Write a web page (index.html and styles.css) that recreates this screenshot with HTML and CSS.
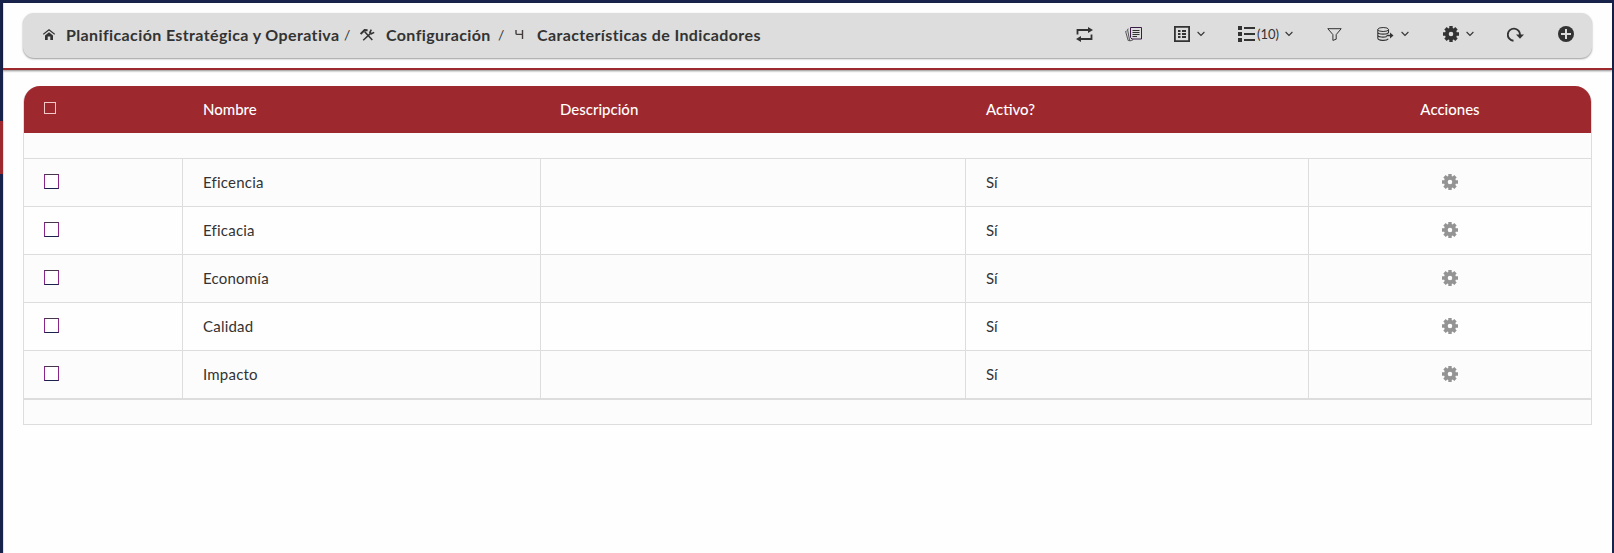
FILE: index.html
```html
<!DOCTYPE html>
<html lang="es">
<head>
<meta charset="utf-8">
<title>Características de Indicadores</title>
<link rel="stylesheet" href="styles.css">
</head>
<body>
<svg class="defs" width="0" height="0">
  <symbol id="gear" viewBox="0 0 16 16">
    <path fill-rule="evenodd" d="M6.300 0h3.400v2l1 .4 1.600-1.300 2.400 2.400-1.400 1.600.5 1.200H16v3.400h-2.200l-.5 1.200 1.400 1.600-2.400 2.400-1.600-1.400-1 .5V16H6.300v-2l-1-.5-1.600 1.400-2.400-2.400 1.400-1.600-.5-1.200H0V6.300h2.200l.5-1.200-1.400-1.600 2.400-2.400 1.600 1.300 1-.4zM8 5.700a2.300 2.300 0 1 0 0 4.600 2.300 2.300 0 1 0 0-4.600z"/>
  </symbol>
  <symbol id="chev" viewBox="0 0 8 6"><path d="M.6 1l3.4 3.4L7.4 1" fill="none" stroke="#333" stroke-width="1.1"/></symbol>
</svg>
<div class="page">
  <div class="tab"></div>
  <header class="top">
    <div class="bar">
      <nav class="crumbs">
        <svg class="home" width="12" height="11" viewBox="0 0 12 11"><path d="M.3 5.400L6 .8l5.700 4.600" fill="none" stroke="#333" stroke-width="1.200"/><path d="M2 6.500L6 3.200l4 3.300V11H7.300V7.600H4.700V11H2z" fill="#333"/></svg>
        <b class="c1">Planificación Estratégica y Operativa</b>
        <i class="s1">/</i>
        <svg class="tools" width="15" height="12" viewBox="0 0 15 12"><path d="M.6 5L4.600 1.100l3 .1" fill="none" stroke="#333" stroke-width="2"/><path d="M4.500 2.500l7.800 8.600" stroke="#333" stroke-width="1.500"/><path d="M3.200 11.300L10.600 4.400" stroke="#333" stroke-width="1.500"/><path d="M11.300.7L9.900 3.300l1.500 1.500 2.800-1.400" fill="none" stroke="#333" stroke-width="1.600"/></svg>
        <b class="c2">Configuración</b>
        <i class="s2">/</i>
        <svg class="four" width="9" height="11" viewBox="0 0 9 11"><path d="M1 1v3.200q0 1.200 1.200 1.200H7.500M7.500 1v9" fill="none" stroke="#443c3c" stroke-width="1.400"/></svg>
        <b class="c3">Características de Indicadores</b>
      </nav>
      <div class="actions">
        <svg class="i1" width="17" height="15" viewBox="0 0 17 15"><path d="M1.500 7.500V3h11M15.500 7.500V12H4.500" fill="none" stroke="#333" stroke-width="1.800"/><path d="M12 0l5 3-5 3zM5 9L0 12l5 3z" fill="#333"/></svg>
        <svg class="i2" width="17" height="15" viewBox="0 0 17 15"><path d="M3.600 2L2.500 2.300 4.700 14l3.500-1.300M1.700 4L.6 4.400l2.600 9.200 1.600-.2" fill="none" stroke="#555" stroke-width="1"/><path d="M5.500.5h11v11.500H7L5.500 10.500z" fill="#ddd" stroke="#3b1c46" stroke-width="1"/><path d="M7.500 3.500h7M7.500 5.500h7M7.500 7.500h7M7.500 9.500h4.500" stroke="#333" stroke-width="1"/></svg>
        <svg class="i3" width="16" height="16" viewBox="0 0 16 16"><path d="M.9.9h14.200v14.200H.9z" fill="none" stroke="#333" stroke-width="1.800"/><path d="M4 5h2.500M8 5h4M4 8h2.500M8 8h4M4 11h2.500M8 11h4" stroke="#333" stroke-width="1.800"/></svg>
        <svg class="v1" width="8" height="6"><use href="#chev"/></svg>
        <svg class="i4" width="17" height="16" viewBox="0 0 17 16"><path d="M0 0h4v4H0zM0 6h4v4H0zM0 12h4v4H0zM6 1h11v2H6zM6 7h11v2H6zM6 13h11v2H6z" fill="#333"/></svg>
        <span class="count">(10)</span>
        <svg class="v2" width="8" height="6"><use href="#chev"/></svg>
        <svg class="i5" width="15" height="13" viewBox="0 0 15 13"><path d="M.8.7h13.400L9.200 6.600v4.600L5.900 12.400V6.600z" fill="none" stroke="#333" stroke-width="1"/></svg>
        <svg class="i6" width="17" height="14" viewBox="0 0 17 14"><path d="M11.500 6V2.500M.8 2.500v8.500c0 3 9 3 10.500.7M.8 5.300c0 2.400 10.700 2.400 10.700 0M.8 8.200c0 2 6 2.400 9 1.300" fill="none" stroke="#333" stroke-width="1.100"/><ellipse cx="6.150" cy="2.500" rx="5.350" ry="2" fill="none" stroke="#333"/><path d="M9.500 8.500H14" stroke="#333" stroke-width="1.500"/><path d="M13 5.500l3.500 3-3.500 3z" fill="#333"/></svg>
        <svg class="v3" width="8" height="6"><use href="#chev"/></svg>
        <svg class="i7" width="16" height="16" fill="#333"><use href="#gear"/></svg>
        <svg class="v4" width="8" height="6"><use href="#chev"/></svg>
        <svg class="i8" width="17" height="15" viewBox="0 0 17 15"><path d="M6.500 13.800A6.100 6.100 0 1 1 13 8" fill="none" stroke="#333" stroke-width="1.900"/><path d="M9 7.500h8l-4 4.200z" fill="#333"/></svg>
        <svg class="i9" width="16" height="16" viewBox="0 0 16 16"><circle cx="8" cy="8" r="8" fill="#333"/><path d="M8 3v10M3 8h10" stroke="#ddd" stroke-width="2"/></svg>
      </div>
    </div>
  </header>
  <main class="grid">
    <div class="row head">
      <div><span class="box small"></span></div><div><span>Nombre</span></div><div class="desc"><span>Descripción</span></div><div><span>Activo?</span></div><div class="act"><span>Acciones</span></div>
    </div>
    <div class="spacer"></div>
    <div class="row alt"><div><span class="box"></span></div><div><span class="name">Eficencia</span></div><div></div><div>Sí</div><div class="act"><svg width="16" height="16" fill="#949494"><use href="#gear"/></svg></div></div>
    <div class="row"><div><span class="box"></span></div><div><span class="name">Eficacia</span></div><div></div><div>Sí</div><div class="act"><svg width="16" height="16" fill="#949494"><use href="#gear"/></svg></div></div>
    <div class="row alt"><div><span class="box"></span></div><div><span class="name">Economía</span></div><div></div><div>Sí</div><div class="act"><svg width="16" height="16" fill="#949494"><use href="#gear"/></svg></div></div>
    <div class="row"><div><span class="box"></span></div><div><span class="name">Calidad</span></div><div></div><div>Sí</div><div class="act"><svg width="16" height="16" fill="#949494"><use href="#gear"/></svg></div></div>
    <div class="row alt"><div><span class="box"></span></div><div><span class="name">Impacto</span></div><div></div><div>Sí</div><div class="act"><svg width="16" height="16" fill="#949494"><use href="#gear"/></svg></div></div>
    <div class="foot"></div>
  </main>
</div>
</body>
</html>
```
FILE: styles.css
```css
* { box-sizing: border-box; }
body { margin: 0; font-family: Lato, "Open Sans", sans-serif; font-size: 15px; color: #333; }
svg { display: block; flex: none; }
.defs { position: absolute; }
.page { height: 553px; border: solid #18234b; border-width: 3px 2px 0 3px; background: #fefefe; position: relative; box-shadow: inset 1px 0 #dfe0ea; }
.tab { position: absolute; left: -3px; top: 118px; width: 3px; height: 53px; background: #9d282e; }
.top { height: 67px; padding: 10px 20px 0; border-bottom: 2px solid #9d282e; box-shadow: 0 1px 2px rgba(0,0,0,.45); }
.bar { display: flex; justify-content: space-between; height: 45px; border-radius: 11px; background: #ddd; box-shadow: 0 1px 2px rgba(0,0,0,.4); padding: 0 18px 0 20px; }
.crumbs, .actions { display: flex; align-items: center; }
.crumbs { height: 43px; white-space: nowrap; }
.crumbs b { font-size: 16px; line-height: 20px; display: block; letter-spacing: .38px; }
.crumbs i { font-style: normal; font-size: 14px; }
.c1 { width: 273px; margin-left: 11px; }
.s1 { width: 5px; margin-left: 5px; }
.tools { margin-left: 11px; }
.c2 { width: 103px; margin-left: 11px; }
.s2 { width: 5px; margin-left: 9px; }
.four { margin-left: 12px; }
.c3 { width: 223px; margin-left: 13px; }
.actions { height: 42px; }
.i2 { margin-left: 32px; }
.i3 { margin-left: 32px; }
.v1, .v2, .v3, .v4 { margin-left: 7px; }
.i4 { margin-left: 33px; }
.count { width: 21px; margin-left: 2px; font-size: 13px; margin-top: -1px; }
.i5 { margin-left: 34px; }
.i6 { margin-left: 35px; }
.i7 { margin-left: 34px; }
.i8 { margin-left: 33px; }
.i9 { margin-left: 34px; }
.grid { margin: 16px 20px 0; border: solid #ddd; border-width: 0 1px 1px; border-radius: 17px 17px 0 0; }
.row { display: grid; grid-template-columns: 158px 358px 425px 343px 1fr; height: 48px; border-top: 1px solid #ddd; }
.row > div { display: flex; align-items: center; padding: 0 0 2px 20px; border-left: 1px solid #ddd; }
.row > div:first-child { border-left: 0; }
.row > .act { justify-content: center; padding: 0 0 2px; }
.head { height: 47px; border: 0; background: #9d282e; color: #fff; font-weight: 500; border-radius: 16px 16px 0 0; }
.row.head > div { border-color: transparent; }
.head > .desc { padding-left: 19px; }
.name { letter-spacing: .22px; }
.spacer { height: 25px; background: #fcfcfc; }
.alt { background: #fcfcfc; }
.foot { height: 26px; border-top: 2px solid #ddd; background: #fcfcfc; }
.box { width: 15px; height: 15px; border: 1px solid; border-color: #45364d #8b258b #18234b; background: #fff; }
.small { width: 12px; height: 12px; border-color: #f0c8c8; background: none; margin-top: -1px; }
```
